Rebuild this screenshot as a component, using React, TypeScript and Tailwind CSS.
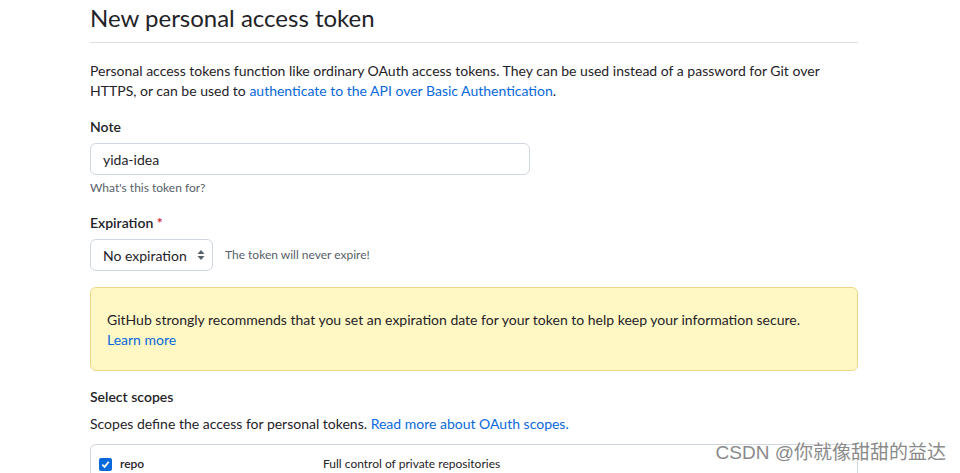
import React from "react";

const font = "font-['Lato','Liberation_Sans',sans-serif]";

export default function App() {
  return (
    <div className={`relative h-[473px] overflow-hidden bg-white text-[#1f2328] ${font}`}>
      <div className="ml-[90px] w-[768px]">
        <div className="border-b border-[#d8dee4] pb-[6px]">
          <h1 className="text-[24px] font-normal leading-[36px]">New personal access token</h1>
        </div>

        <p className="mt-[18px] whitespace-nowrap text-[14px] leading-[20px]">
          Personal access tokens function like ordinary OAuth access tokens. They can be used instead of a password for Git over
          <br />
          HTTPS, or can be used to{" "}
          <a className="text-[#0969da]">authenticate to the API over Basic Authentication</a>.
        </p>

        <div className="mt-[16px]">
          <label className="block text-[14px] font-semibold leading-[20px]">Note</label>
          <input
            readOnly
            value="yida-idea"
            className="mt-[6px] h-[32px] w-[440px] rounded-[6px] border border-[#d0d7de] px-[12px] text-[14px] outline-none"
          />
          <p className="mt-[4px] text-[12px] leading-[18px] text-[#57606a]">What's this token for?</p>
        </div>

        <div className="mt-[16px]">
          <label className="block text-[14px] font-semibold leading-[20px]">
            Expiration <span className="text-[#cf222e]">*</span>
          </label>
          <div className="mt-[6px] flex items-center gap-[12px]">
            <div className="flex h-[32px] w-[123px] items-center justify-between rounded-[6px] border border-[#d0d7de] pl-[12px] pr-[7px] text-[14px]">
              <span>No expiration</span>
              <svg width="8" height="12" viewBox="0 0 8 12" className="fill-[#57606a]">
                <path d="M4 1 L7.5 5 H0.5 Z" />
                <path d="M4 11 L7.5 7 H0.5 Z" />
              </svg>
            </div>
            <span className="text-[12px] text-[#57606a]">The token will never expire!</span>
          </div>
        </div>

        <div className="mt-[16px] rounded-[6px] border border-[#eed888] bg-[#fff8c5] px-[16px] pb-[20px] pt-[22px] text-[14px] leading-[20px]">
          <p className="whitespace-nowrap">GitHub strongly recommends that you set an expiration date for your token to help keep your information secure.</p>
          <a className="text-[#0969da]">Learn more</a>
        </div>

        <div className="mt-[16px]">
          <h3 className="text-[14px] font-semibold leading-[20px]">Select scopes</h3>
          <p className="mt-[7px] text-[14px] leading-[20px]">
            Scopes define the access for personal tokens.{" "}
            <a className="text-[#0969da]">Read more about OAuth scopes.</a>
          </p>
        </div>

        <div className="mt-[10px] h-[40px] rounded-t-[6px] border border-[#d0d7de]">
          <div className="flex items-center px-[8px] pt-[10px] text-[12px]">
            <span className="flex h-[13px] w-[13px] items-center justify-center rounded-[2px] bg-[#0969da]">
              <svg width="9" height="9" viewBox="0 0 10 10" fill="none" stroke="white" strokeWidth="2">
                <path d="M1.5 5.2 L4 7.6 L8.6 2" />
              </svg>
            </span>
            <span className="ml-[8px] w-[203px] font-semibold">repo</span>
            <span className="text-[#1f2328]">Full control of private repositories</span>
          </div>
        </div>
      </div>

      <div className="absolute bottom-[8px] right-[14px] text-[19px] leading-[24px] text-[#8a8a8a] [text-shadow:0_0_2px_white] font-['Liberation_Sans','Noto_Sans_CJK_SC',sans-serif]">
        CSDN @你就像甜甜的益达
      </div>
    </div>
  );
}
